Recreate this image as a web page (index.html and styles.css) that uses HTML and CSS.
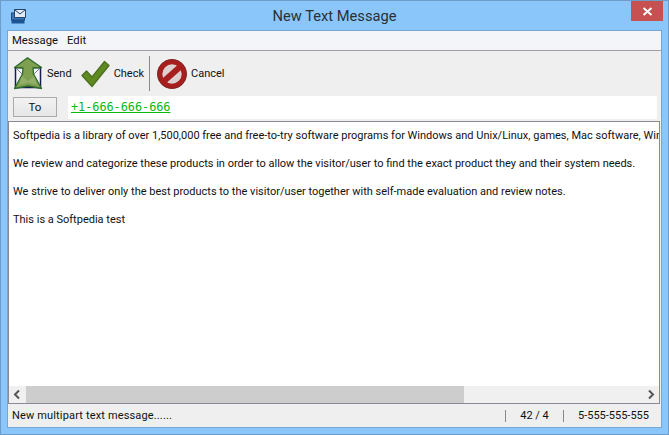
FILE: index.html
```html
<!DOCTYPE html>
<html lang="en">
<head>
<meta charset="utf-8">
<title>New Text Message</title>
<link rel="stylesheet" href="styles.css">
</head>
<body>
<div class="window">
  <header class="titlebar">
    <svg class="appicon" width="15" height="15" viewBox="0 0 15 15"><rect x="0.500" y="11" width="13" height="3.500" fill="#1c5596"/><rect x="0.500" y="4" width="13" height="7" fill="#3b76b5" stroke="#1c4a80"/><path d="M3.500 0.500h11v8h-11z" fill="#e4eaf2" stroke="#24446e"/><path d="M4 1l5 4 5-4" fill="none" stroke="#24446e"/></svg>
    <h1 class="title">New Text Message</h1>
    <button class="close"><svg width="11" height="9" viewBox="0 0 11 9"><path d="M1.500 1l8 7M9.500 1l-8 7" stroke="#fff" stroke-width="2"/></svg></button>
  </header>
  <main class="client">
    <nav class="menu"><span>Message</span><span>Edit</span></nav>
    <div class="toolbar">
      <div class="tool tool-send">
        <svg width="30" height="33" viewBox="0 0 30 33"><rect x="2.500" y="10.500" width="25" height="20" fill="#f4f4fb" stroke="#1a1a55" stroke-width="1.500"/><path d="M3 11l7 7M27 11l-7 7" fill="none" stroke="#77778a"/><path d="M14.500 0.800L28.500 10.500 20 11l0.500 6 8 14.500-13-2.500L1.500 31.500l8-14.500 0.500-6-8.500-0.500z" fill="#7f9f50" stroke="#2d6b2c" stroke-width="1.300" stroke-linejoin="round"/><path d="M9 19l6 5 6-5 3 9-9-2.500L6 28z" fill="#93ad6b"/></svg>
        <span>Send</span>
      </div>
      <div class="tool tool-check">
        <svg width="29" height="28" viewBox="0 0 29 28"><path d="M1 15.500L5.500 11l5.500 6L23.500 1.500 28 5.500 11 26.500z" fill="#5f8a1f" stroke="#4d6f22" stroke-width="1.300" stroke-linejoin="round"/></svg>
        <span>Check</span>
      </div>
      <div class="divider"></div>
      <div class="tool tool-cancel">
        <svg width="30" height="30" viewBox="0 0 30 30"><circle cx="15" cy="15" r="12.200" fill="#ddd0d0" stroke="#a81d1d" stroke-width="5"/><circle cx="15" cy="15" r="14.500" fill="none" stroke="#7d2a2a" stroke-width="1"/><path d="M6.500 22.500L23.500 7.500" stroke="#a81d1d" stroke-width="6"/></svg>
        <span>Cancel</span>
      </div>
    </div>
    <div class="recipient">
      <button class="to">To</button>
      <div class="number"><span>+1-666-666-666</span></div>
    </div>
    <section class="editor">
      <div class="text">
        <p>Softpedia is a library of over 1,500,000 free and free-to-try software programs for Windows and Unix/Linux, games, Mac software, Windows drivers, mobile devices and IT-related articles.</p>
        <p>We review and categorize these products in order to allow the visitor/user to find the exact product they and their system needs.</p>
        <p>We strive to deliver only the best products to the visitor/user together with self-made evaluation and review notes.</p>
        <p>This is a Softpedia test</p>
      </div>
      <div class="scrollbar">
        <svg class="arrow" width="17" height="17" viewBox="0 0 17 17"><path d="M10 4.500L6 8.500l4 4" fill="none" stroke="#555" stroke-width="2"/></svg>
        <div class="track"><div class="thumb"></div></div>
        <svg class="arrow" width="17" height="17" viewBox="0 0 17 17"><path d="M7 4.500l4 4-4 4" fill="none" stroke="#555" stroke-width="2"/></svg>
      </div>
    </section>
    <footer class="status">
      <span class="status-msg">New multipart text message......</span>
      <span class="status-count">42 / 4</span>
      <span class="status-num">5-555-555-555</span>
    </footer>
  </main>
</div>
</body>
</html>
```
FILE: styles.css
```css
* { box-sizing: border-box; }
html, body { margin: 0; padding: 0; }
body { width: 669px; height: 435px; overflow: hidden; font-family: Roboto, sans-serif; }
.window { width: 669px; height: 435px; background: #8bc6fa; border: 1px solid #6f9cc8; display: flex; flex-direction: column; padding: 0 6px 6px; }
.titlebar { height: 29px; flex: none; display: flex; align-items: center; position: relative; }
.appicon { margin: 1px 0 0 4px; flex: none; }
.title { flex: 1; margin: 0; padding-right: 19px; text-align: center; font: 400 14.700px/30px Roboto, sans-serif; color: #2a3038; }
.close { position: absolute; top: 0; right: -1px; width: 32px; height: 20px; border: 0; padding: 0; background: #c75050; display: flex; align-items: center; justify-content: center; }
.client { flex: 1; min-height: 0; display: flex; flex-direction: column; background: #efefef; border: 1px solid #76a6d4; }
.menu { height: 20px; flex: none; background: #f4f5f8; border-bottom: 1px solid #a0a0a0; display: flex; gap: 9px; padding: 1px 0 0 4px; font-size: 11.300px; line-height: 18px; color: #111; }
.toolbar { height: 45px; flex: none; display: flex; align-items: center; font-size: 11px; color: #111; }
.tool { display: flex; align-items: center; }
.tool-send { margin-left: 5px; gap: 4px; }
.tool-check { margin-left: 9px; gap: 4px; }
.divider { width: 1px; height: 35px; background: #8a8a8a; margin: 0 7px 0 5px; }
.tool-cancel { gap: 4px; }
.recipient { height: 25px; flex: none; display: flex; align-items: flex-start; }
.to { width: 44px; height: 20px; margin: 1px 0 0 5px; border: 1px solid #ababab; background: linear-gradient(#f2f2f2, #e6e6e6); font: 11.500px Roboto, sans-serif; color: #111; padding: 0; }
.number { flex: 1; height: 23px; margin: 0 4px 0 11px; background: #fff; padding-left: 3px; font: 11.800px/23px "DejaVu Sans Mono", monospace; color: #0db80d; text-decoration: underline; }
.editor { flex: 1; min-height: 0; margin-right: 1px; display: flex; flex-direction: column; background: #fff; border: 1px solid #8a8a96; overflow: hidden; }
.text { flex: 1; min-height: 0; overflow: hidden; white-space: nowrap; padding: 7px 0 0 4px; font-size: 11px; line-height: 14px; color: #111; }
.text p { margin: 0 0 14px; }
.scrollbar { height: 17px; flex: none; display: flex; background: #f0f0f0; }
.track { flex: 1; }
.thumb { width: 438px; height: 17px; background: #cdcdcd; }
.status { height: 23px; flex: none; display: flex; align-items: center; font-size: 11px; color: #111; padding-left: 4px; }
.status-msg { flex: 1; letter-spacing: 0.15px; }
.status-count { width: 59px; text-align: center; border-left: 1px solid #888; border-right: 1px solid #888; line-height: 12px; }
.status-num { width: 97px; padding-left: 14px; }
```
